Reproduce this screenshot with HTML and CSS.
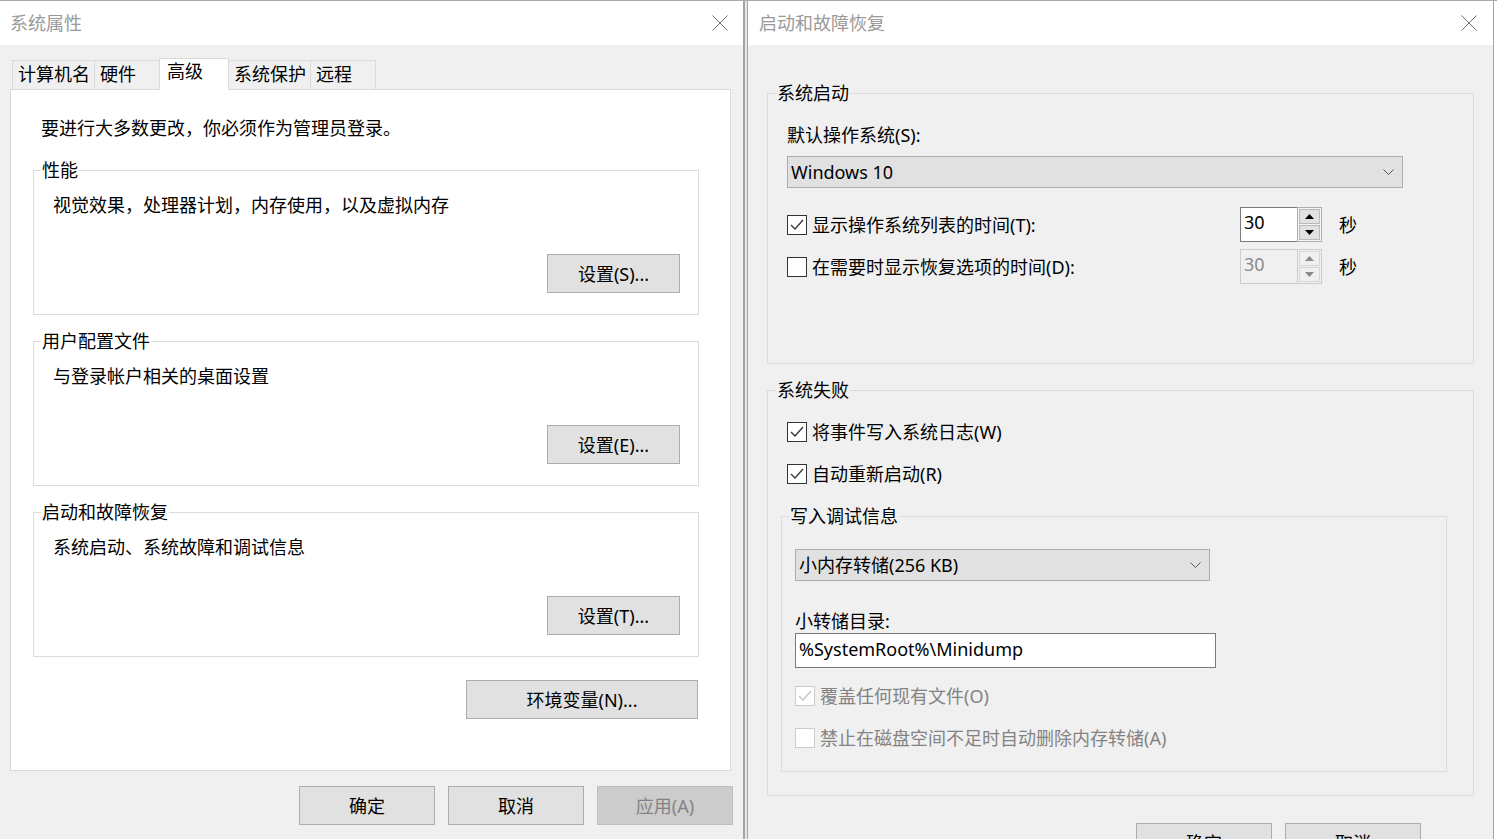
FILE: index.html
```html
<!DOCTYPE html>
<html lang="zh-CN">
<head>
<meta charset="utf-8">
<title>系统属性</title>
<link rel="stylesheet" href="styles.css">
</head>
<body>
<div class="screen">
  <section class="win win-left">
    <header class="titlebar">
      <span class="title">系统属性</span>
      <svg class="close" width="16" height="16" viewBox="0 0 16 16"><path d="M0.5 0.5 L15.5 15.5 M15.5 0.5 L0.5 15.5" stroke="#6f6f6f" stroke-width="1" fill="none"/></svg>
    </header>
    <div class="sys-body">
      <div class="tabs">
        <div class="tab">计算机名</div>
        <div class="tab">硬件</div>
        <div class="tab active">高级</div>
        <div class="tab">系统保护</div>
        <div class="tab">远程</div>
      </div>
      <div class="panel">
        <p class="intro">要进行大多数更改，你必须作为管理员登录。</p>
        <fieldset class="group">
          <legend>性能</legend>
          <div class="group-body">
            <p class="desc">视觉效果，处理器计划，内存使用，以及虚拟内存</p>
            <div class="btn-row"><button class="btn">设置(S)...</button></div>
          </div>
        </fieldset>
        <fieldset class="group">
          <legend>用户配置文件</legend>
          <div class="group-body">
            <p class="desc">与登录帐户相关的桌面设置</p>
            <div class="btn-row"><button class="btn">设置(E)...</button></div>
          </div>
        </fieldset>
        <fieldset class="group">
          <legend>启动和故障恢复</legend>
          <div class="group-body">
            <p class="desc">系统启动、系统故障和调试信息</p>
            <div class="btn-row"><button class="btn">设置(T)...</button></div>
          </div>
        </fieldset>
        <div class="env-row"><button class="btn btn-env">环境变量(N)...</button></div>
      </div>
      <div class="dialog-buttons">
        <button class="btn btn-dialog">确定</button>
        <button class="btn btn-dialog">取消</button>
        <button class="btn btn-dialog" disabled>应用(A)</button>
      </div>
    </div>
  </section>
  <div class="gap"></div>
  <section class="win win-right">
    <header class="titlebar">
      <span class="title">启动和故障恢复</span>
      <svg class="close" width="16" height="16" viewBox="0 0 16 16"><path d="M0.5 0.5 L15.5 15.5 M15.5 0.5 L0.5 15.5" stroke="#6f6f6f" stroke-width="1" fill="none"/></svg>
    </header>
    <div class="rec-body">
      <fieldset class="rgroup">
        <legend>系统启动</legend>
        <div class="rgroup-body startup-body">
          <div class="field-label">默认操作系统(S):</div>
          <div class="select select-os">
            <span>Windows 10</span>
            <svg width="11" height="6" viewBox="0 0 11 6"><polyline points="0.5,0.5 5.5,5.5 10.5,0.5" stroke="#555" stroke-width="1" fill="none"/></svg>
          </div>
          <div class="spin-row">
            <div class="check-label">
              <span class="cb"><svg width="18" height="18" viewBox="0 0 18 18"><polyline points="3,9 7,13 15,4" stroke="#333" stroke-width="1.3" fill="none"/></svg></span>
              <span class="cb-text">显示操作系统列表的时间(T):</span>
            </div>
            <div class="spin">
              <div class="spin-input">30</div>
              <div class="spin-btns">
                <div class="spin-btn"><svg width="9" height="5" viewBox="0 0 9 5"><polygon points="0,5 4.5,0 9,5" fill="#000"/></svg></div>
                <div class="spin-btn"><svg width="9" height="5" viewBox="0 0 9 5"><polygon points="0,0 4.5,5 9,0" fill="#000"/></svg></div>
              </div>
            </div>
            <span class="unit">秒</span>
          </div>
          <div class="spin-row spin-row-2">
            <div class="check-label">
              <span class="cb"></span>
              <span class="cb-text">在需要时显示恢复选项的时间(D):</span>
            </div>
            <div class="spin disabled">
              <div class="spin-input">30</div>
              <div class="spin-btns">
                <div class="spin-btn"><svg width="9" height="5" viewBox="0 0 9 5"><polygon points="0,5 4.5,0 9,5" fill="#8a8a8a"/></svg></div>
                <div class="spin-btn"><svg width="9" height="5" viewBox="0 0 9 5"><polygon points="0,0 4.5,5 9,0" fill="#8a8a8a"/></svg></div>
              </div>
            </div>
            <span class="unit">秒</span>
          </div>
        </div>
      </fieldset>
      <fieldset class="rgroup rgroup-fail">
        <legend>系统失败</legend>
        <div class="rgroup-body fail-body">
          <div class="check-row outer-check">
            <span class="cb"><svg width="18" height="18" viewBox="0 0 18 18"><polyline points="3,9 7,13 15,4" stroke="#333" stroke-width="1.3" fill="none"/></svg></span>
            <span class="cb-text">将事件写入系统日志(W)</span>
          </div>
          <div class="check-row outer-check">
            <span class="cb"><svg width="18" height="18" viewBox="0 0 18 18"><polyline points="3,9 7,13 15,4" stroke="#333" stroke-width="1.3" fill="none"/></svg></span>
            <span class="cb-text">自动重新启动(R)</span>
          </div>
          <fieldset class="rgroup inner-group">
            <legend>写入调试信息</legend>
            <div class="inner-body">
              <div class="select select-dump">
                <span>小内存转储(256 KB)</span>
                <svg width="11" height="6" viewBox="0 0 11 6"><polyline points="0.5,0.5 5.5,5.5 10.5,0.5" stroke="#555" stroke-width="1" fill="none"/></svg>
              </div>
              <div class="field-label dir-label">小转储目录:</div>
              <div class="text-input">%SystemRoot%\Minidump</div>
              <div class="check-row disabled first-disabled">
                <span class="cb"><svg width="18" height="18" viewBox="0 0 18 18"><polyline points="3,9 7,13 15,4" stroke="#c4c4c4" stroke-width="1.3" fill="none"/></svg></span>
                <span class="cb-text">覆盖任何现有文件(O)</span>
              </div>
              <div class="check-row disabled">
                <span class="cb"></span>
                <span class="cb-text">禁止在磁盘空间不足时自动删除内存转储(A)</span>
              </div>
            </div>
          </fieldset>
        </div>
      </fieldset>
      <div class="rec-buttons">
        <button class="btn btn-dialog">确定</button>
        <button class="btn btn-dialog">取消</button>
      </div>
    </div>
  </section>
</div>
</body>
</html>
```

FILE: styles.css
```css
* { box-sizing: border-box; }
html, body { margin: 0; padding: 0; }
body {
  width: 1497px;
  height: 839px;
  overflow: hidden;
  background: #ffffff;
  font-family: "Noto Sans", "Noto Sans CJK SC", sans-serif;
  font-size: 18px;
  color: #000;
}
.screen {
  display: flex;
  height: 839px;
  border-top: 1px solid #a9a9a9;
}
.win {
  height: 838px;
  display: flex;
  flex-direction: column;
  background: #f0f0f0;
  overflow: hidden;
  flex: none;
}
.win-left { width: 745px; border-right: 2px solid #a3a3a3; }
.gap { width: 2px; background: #e8e8e8; flex: none; }
.win-right { width: 747px; border-left: 1px solid #a3a3a3; border-right: 1px solid #a3a3a3; }

.titlebar {
  height: 44px;
  flex: none;
  background: #fff;
  display: flex;
  align-items: center;
  justify-content: space-between;
  color: #9a9a9a;
}
.win-left .titlebar { padding: 0 15px 0 10px; }
.win-right .titlebar { padding: 0 16px 0 11px; }
.title { font-size: 18px; line-height: 24px; }
.close { display: block; }

/* left dialog */
.sys-body { padding-top: 13px; }
.tabs {
  display: flex;
  align-items: flex-start;
  height: 32px;
  margin-left: 12px;
  position: relative;
  z-index: 1;
}
.tab {
  height: 29px;
  margin-top: 2px;
  margin-left: -1px;
  min-width: 66px;
  padding: 0 4px 0 5px;
  border: 1px solid #d9d9d9;
  border-bottom: none;
  background: #f0f0f0;
  line-height: 26px;
  white-space: nowrap;
}
.tab:first-child { margin-left: 0; }
.tab.active {
  height: 32px;
  margin-top: 0;
  min-width: 70px;
  padding-left: 7px;
  background: #fff;
  line-height: 25px;
}
.panel {
  margin: -1px 0 0 10px;
  width: 721px;
  height: 682px;
  background: #fff;
  border: 1px solid #d9d9d9;
  padding: 26px 31px 0 22px;
}
.intro { margin: 0 0 0 8px; line-height: 24px; }
.group {
  margin: 18px 0 0;
  padding: 0;
  border: 1px solid #dcdcdc;
  min-width: 0;
}
.group + .group { margin-top: 14px; }
.group legend, .rgroup legend {
  margin-left: 7px;
  padding: 0 1px;
  line-height: 24px;
  font-size: 18px;
}
.group-body { padding: 11px 18px 21px 19px; }
.desc { margin: 0; line-height: 24px; }
.btn-row { display: flex; justify-content: flex-end; margin-top: 37px; }
.btn {
  width: 133px;
  height: 39px;
  padding: 0;
  background: #e1e1e1;
  border: 1px solid #adadad;
  font-family: inherit;
  font-size: 18px;
  line-height: 24px;
  color: #000;
}
.btn:disabled { background: #cccccc; border-color: #bfbfbf; color: #838383; }
.env-row { display: flex; justify-content: flex-end; margin-top: 23px; padding-right: 1px; }
.btn-env { width: 232px; }
.dialog-buttons {
  display: flex;
  justify-content: flex-end;
  gap: 13px;
  margin-top: 15px;
  padding-right: 10px;
}
.btn-dialog { width: 136px; flex: none; }

/* right dialog */
.rec-body { padding: 36px 19px 0 19px; }
.rgroup {
  margin: 0;
  padding: 0;
  border: 1px solid #dcdcdc;
  min-width: 0;
}
.rgroup legend { margin-left: 8px; }
.rgroup-fail { margin-top: 14px; }
.startup-body { padding: 18px 0 79px 19px; }
.field-label { line-height: 24px; }
.select {
  display: flex;
  align-items: center;
  justify-content: space-between;
  height: 32px;
  background: #e1e1e1;
  border: 1px solid #adadad;
  padding: 0 8px 0 3px;
  line-height: 24px;
}
.select svg { display: block; }
.select-os { width: 616px; margin-top: 9px; }
.spin-row { display: flex; align-items: center; height: 35px; margin-top: 19px; }
.spin-row-2 { margin-top: 7px; }
.check-label { display: flex; align-items: center; width: 453px; flex: none; }
.cb {
  width: 20px;
  height: 20px;
  flex: none;
  border: 1px solid #333;
  background: #fff;
  display: flex;
  align-items: center;
  justify-content: center;
}
.cb svg { display: block; }
.cb-text { margin-left: 5px; line-height: 24px; white-space: nowrap; }
.spin { display: flex; width: 82px; height: 35px; flex: none; }
.spin-input {
  width: 57px;
  border: 1px solid #7a7a7a;
  border-right: none;
  background: #fff;
  padding-left: 3px;
  line-height: 28px;
}
.spin-btns {
  width: 25px;
  border: 1px solid #adadad;
  background: #f5f5f5;
  display: flex;
  flex-direction: column;
  padding: 1px;
  gap: 1px;
}
.spin-btn {
  flex: 1;
  background: #e1e1e1;
  border: 1px solid #b9b9b9;
  display: flex;
  align-items: center;
  justify-content: center;
}
.spin-btn svg { display: block; }
.spin.disabled .spin-input { border-color: #cccccc; background: #f0f0f0; color: #8a8a8a; }
.spin.disabled .spin-btns { border-color: #cccccc; background: #f0f0f0; }
.spin.disabled .spin-btn { background: #f0f0f0; border-color: #d6d6d6; }
.unit { margin-left: 17px; line-height: 24px; }

.fail-body { padding: 9px 0 23px 13px; }
.check-row { display: flex; align-items: center; height: 42px; }
.outer-check { padding-left: 6px; }
.inner-group { margin: 9px 26px 0 0; }
.inner-group legend { margin-left: 7px; }
.inner-body { padding: 21px 0 12px 13px; }
.select-dump { width: 415px; }
.dir-label { margin-top: 28px; }
.text-input {
  width: 421px;
  height: 35px;
  border: 1px solid #7a7a7a;
  background: #fff;
  padding-left: 3px;
  line-height: 31px;
}
.first-disabled { margin-top: 7px; }
.check-row.disabled .cb { border-color: #cccccc; }
.check-row.disabled .cb-text { color: #838383; }
.rec-buttons {
  display: flex;
  justify-content: flex-end;
  gap: 13px;
  margin-top: 27px;
  padding-right: 53px;
}
```
